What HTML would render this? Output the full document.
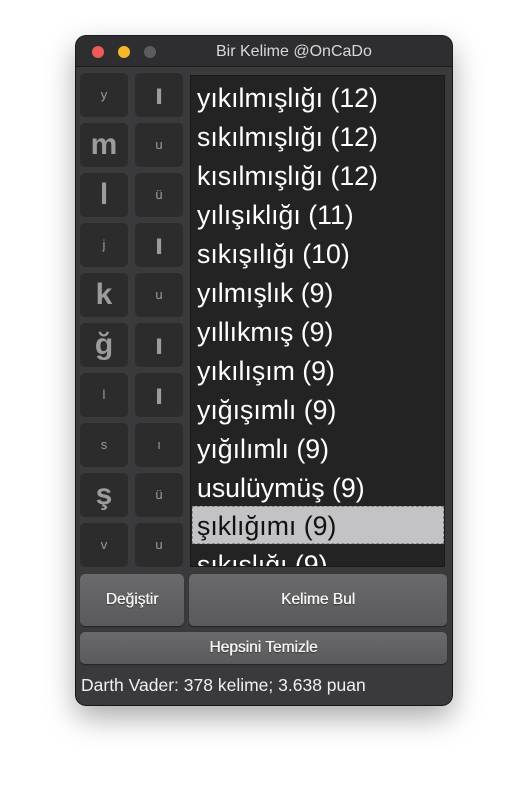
<!DOCTYPE html>
<html><head><meta charset="utf-8"><style>
*{margin:0;padding:0;box-sizing:border-box}
body{width:527px;height:791px;background:#fff;font-family:"Liberation Sans",sans-serif;position:relative;overflow:hidden}
.win{position:absolute;left:76px;top:36px;width:376px;height:669px;background:#3a3a3c;border-radius:10px;box-shadow:0 12px 30px rgba(0,0,0,.35),0 0 0 1px #1e1e1e;overflow:hidden}
.tb{position:absolute;left:0;top:0;width:376px;height:31px;background:#2e2e30;border-bottom:1px solid #1c1c1c}
.tt{position:absolute;left:140px;top:0;color:#d8d8d8;font-size:16px;line-height:31px;white-space:nowrap}
.dot{position:absolute;top:10px;width:12px;height:12px;border-radius:6px}
.tile{position:absolute;width:48px;height:44px;background:#2c2c2d;border-radius:5px;color:#9c9c9c;text-align:center;line-height:44px}
.b{font-size:30px;font-weight:bold}
.s{font-size:13px}
.list{position:absolute;left:114px;top:39px;width:255px;height:492px;background:#232323;border:1px solid #1a1a1a;overflow:hidden}
.it{position:absolute;left:6px;font-size:26.7px;color:#fff;white-space:nowrap;line-height:38px}
.sel{position:absolute;left:1px;top:430px;width:252px;height:38px;background:#c3c3c5;border:1px dashed #888}
.btn{position:absolute;background:linear-gradient(#6a6a6c,#5a5a5c);border-radius:5px;color:#f4f4f4;font-size:15.5px;text-align:center;box-shadow:0 1px 1px #222;text-shadow:0.4px 0 0 #f4f4f4,0 1px 1px #333}
.st{position:absolute;left:5px;top:639px;color:#f0f0f0;font-size:17.5px;white-space:nowrap}
</style></head><body>
<div class="win">
<div class="tb"><div class="tt">Bir Kelime @OnCaDo</div>
<div class="dot" style="left:16px;background:#ed5b56"></div>
<div class="dot" style="left:42px;background:#f4b828"></div>
<div class="dot" style="left:68px;background:#5c5c5e"></div>
</div>
<div class="tile s" style="left:4px;top:37px">y</div><div class="tile b" style="left:59px;top:37px">ı</div>
<div class="tile b" style="left:4px;top:87px">m</div><div class="tile s" style="left:59px;top:87px">u</div>
<div class="tile b" style="left:4px;top:137px">l</div><div class="tile s" style="left:59px;top:137px">ü</div>
<div class="tile s" style="left:4px;top:187px">j</div><div class="tile b" style="left:59px;top:187px">ı</div>
<div class="tile b" style="left:4px;top:237px">k</div><div class="tile s" style="left:59px;top:237px">u</div>
<div class="tile b" style="left:4px;top:287px">ğ</div><div class="tile b" style="left:59px;top:287px">ı</div>
<div class="tile s" style="left:4px;top:337px">l</div><div class="tile b" style="left:59px;top:337px">ı</div>
<div class="tile s" style="left:4px;top:387px">s</div><div class="tile s" style="left:59px;top:387px">ı</div>
<div class="tile b" style="left:4px;top:437px">ş</div><div class="tile s" style="left:59px;top:437px">ü</div>
<div class="tile s" style="left:4px;top:487px">v</div><div class="tile s" style="left:59px;top:487px">u</div>
<div class="list">
<div class="sel"></div>
<div class="it" style="top:3px">yıkılmışlığı (12)</div>
<div class="it" style="top:42px">sıkılmışlığı (12)</div>
<div class="it" style="top:81px">kısılmışlığı (12)</div>
<div class="it" style="top:120px">yılışıklığı (11)</div>
<div class="it" style="top:159px">sıkışılığı (10)</div>
<div class="it" style="top:198px">yılmışlık (9)</div>
<div class="it" style="top:237px">yıllıkmış (9)</div>
<div class="it" style="top:276px">yıkılışım (9)</div>
<div class="it" style="top:315px">yığışımlı (9)</div>
<div class="it" style="top:354px">yığılımlı (9)</div>
<div class="it" style="top:393px">usulüymüş (9)</div>
<div class="it" style="top:431px;color:#111">şıklığımı (9)</div>
<div class="it" style="top:470px">sıkışlığı (9)</div>
</div>
<div class="btn" style="left:4px;top:538px;width:104px;height:52px;line-height:52px">Değiştir</div>
<div class="btn" style="left:113px;top:538px;width:258px;height:52px;line-height:52px">Kelime Bul</div>
<div class="btn" style="left:4px;top:596px;width:367px;height:32px;line-height:32px">Hepsini Temizle</div>
<div class="st">Darth Vader: 378 kelime; 3.638 puan</div>
</div>
</body></html>
